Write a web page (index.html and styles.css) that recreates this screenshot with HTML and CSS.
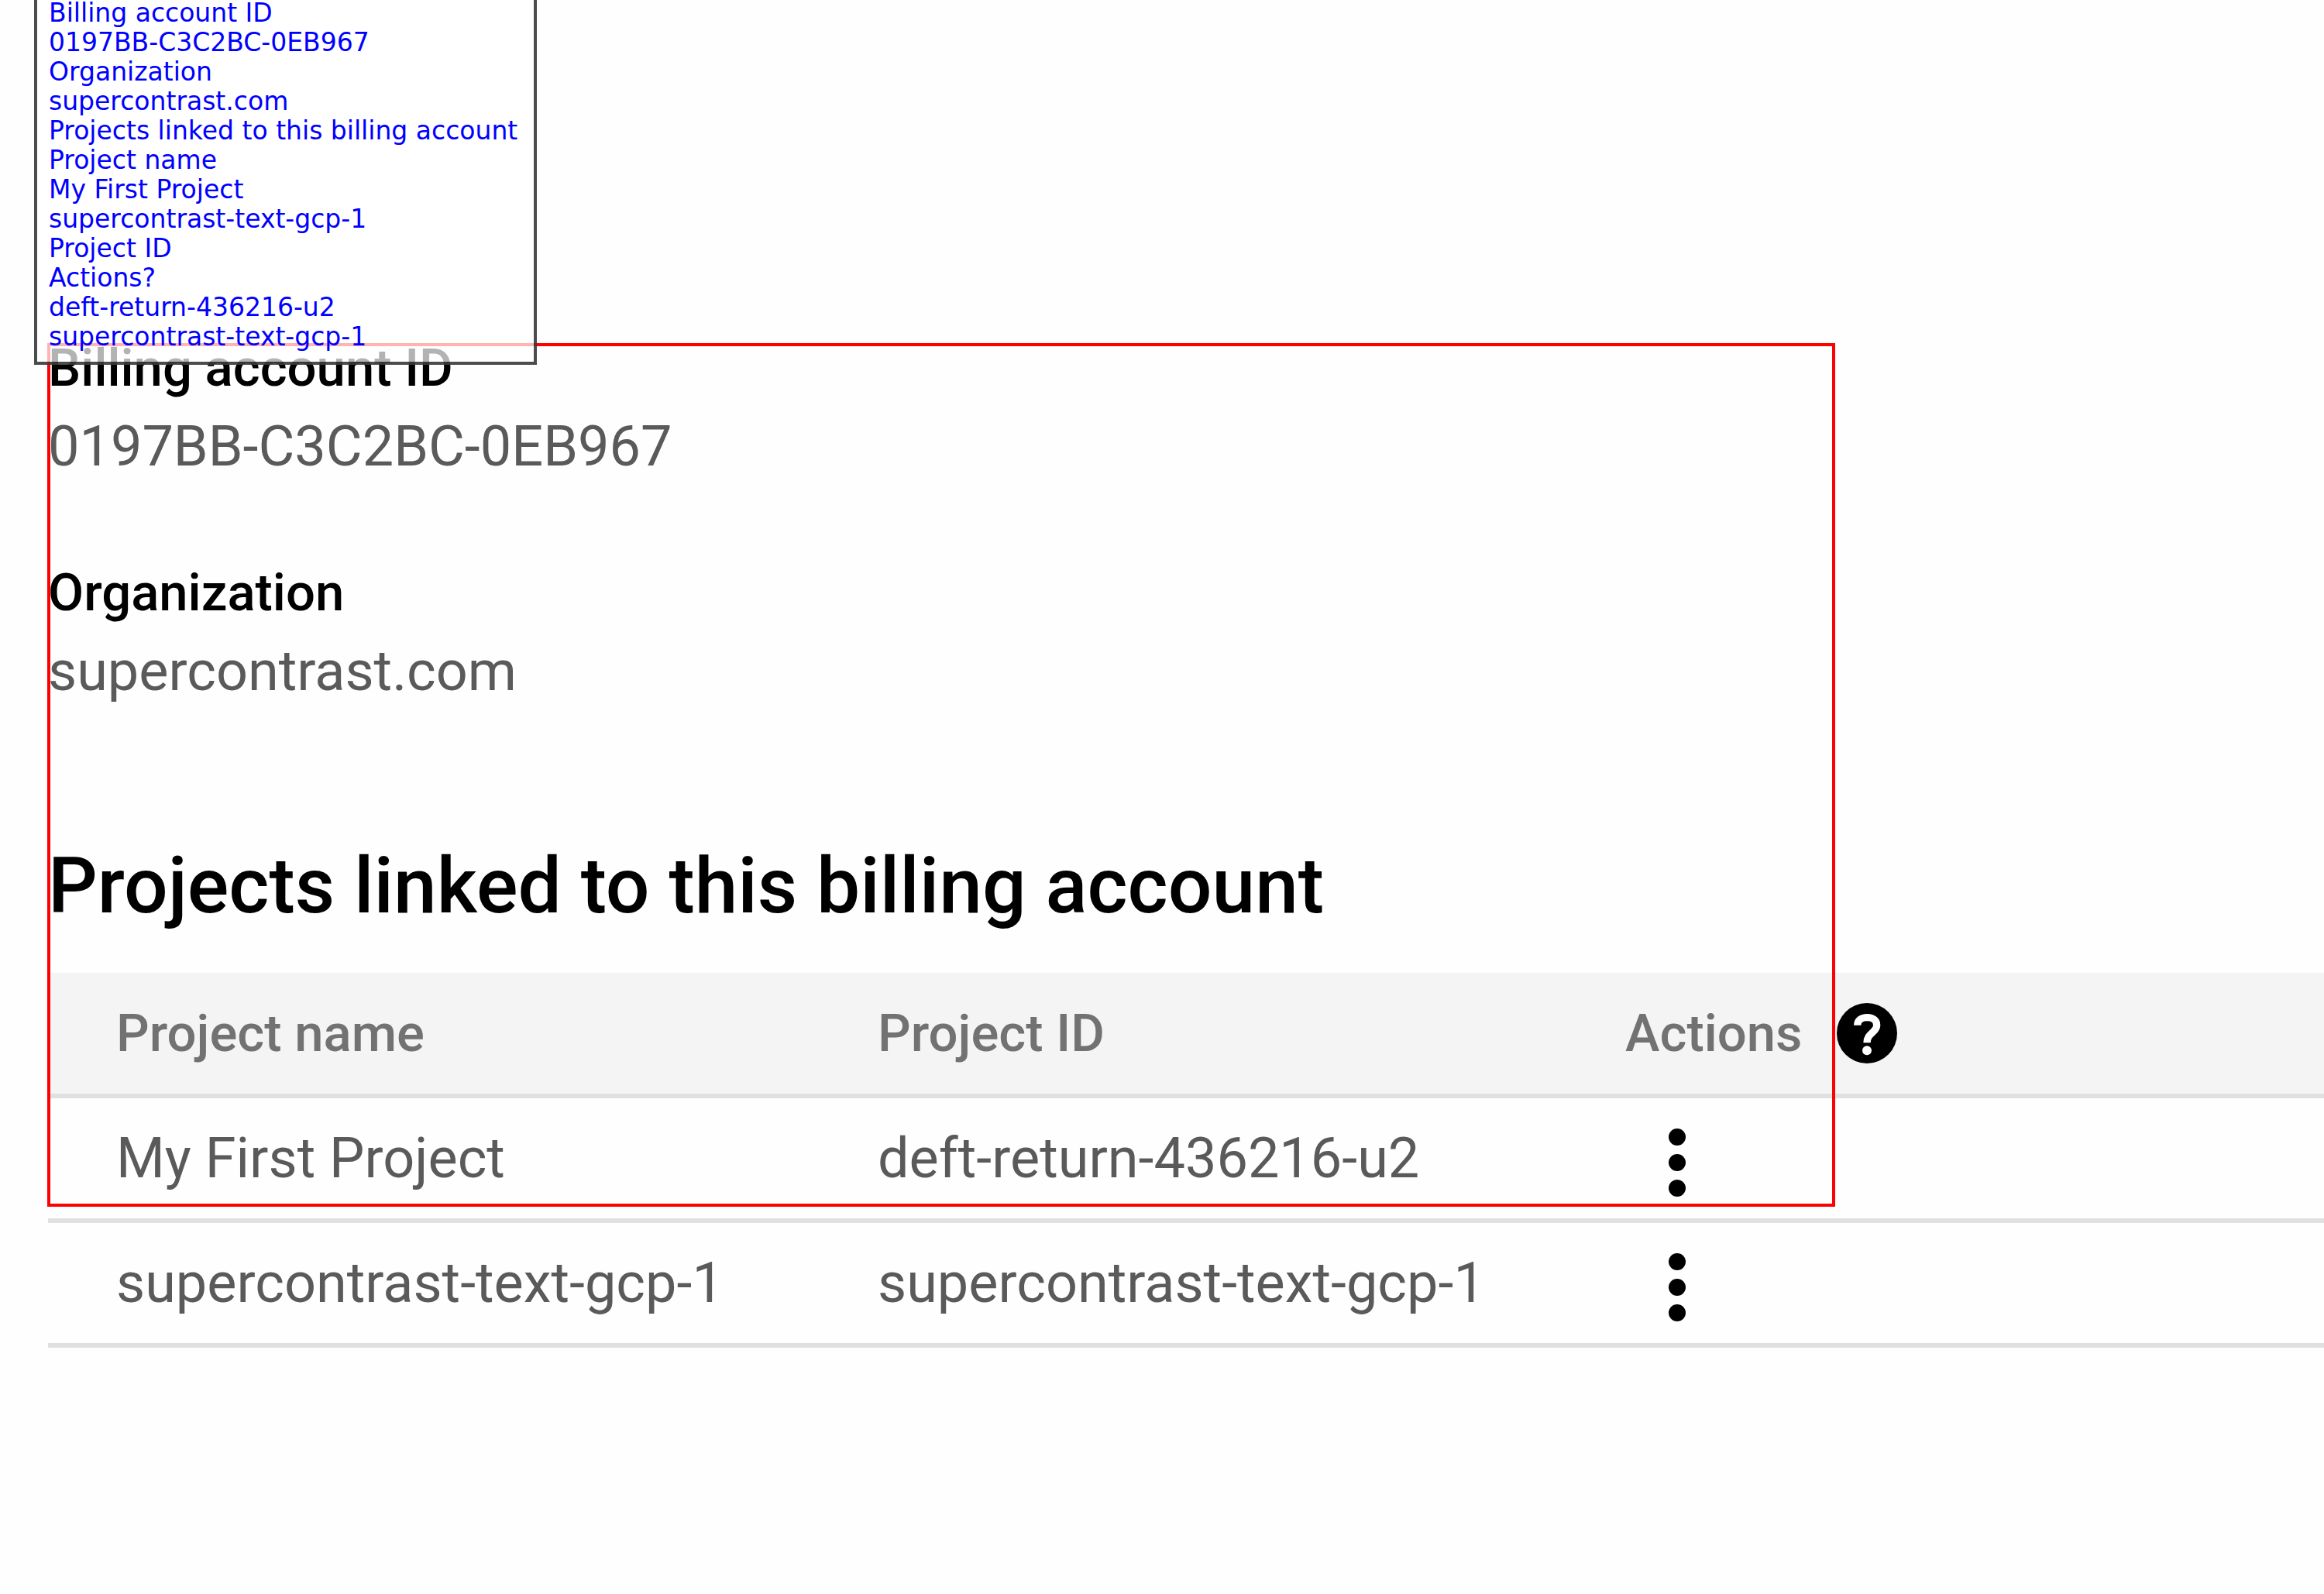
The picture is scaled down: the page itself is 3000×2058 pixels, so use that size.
FILE: index.html
```html
<!DOCTYPE html>
<html lang="en">
<head>
<meta charset="utf-8">
<meta name="viewport" content="width=device-width, initial-scale=1">
<title>Billing account</title>
<link rel="stylesheet" href="styles.css">
</head>
<body>
<main class="page">
  <dl class="details">
    <div class="detail">
      <dt class="detail-label">Billing account ID</dt>
      <dd class="detail-value">0197BB-C3C2BC-0EB967</dd>
    </div>
    <div class="detail">
      <dt class="detail-label">Organization</dt>
      <dd class="detail-value">supercontrast.com</dd>
    </div>
  </dl>

  <h1 class="title">Projects linked to this billing account</h1>

  <table class="projects">
    <colgroup>
      <col class="col-name">
      <col class="col-id">
      <col>
    </colgroup>
    <thead>
      <tr>
        <th scope="col">Project name</th>
        <th scope="col">Project ID</th>
        <th scope="col">
          <div class="actions-head">
            <span>Actions</span>
            <button class="help" type="button" aria-label="Help">
              <svg class="help-icon" viewBox="0 0 234 234" aria-hidden="true">
                <circle cx="117" cy="117" r="117"/>
                <path d="M80 86C80 67 96 56 118 56C141 56 155 68 155 86C155 114 117 116 117 154" fill="none" stroke="#fff" stroke-width="28"/>
                <circle cx="117" cy="184" r="18" fill="#fff"/>
              </svg>
            </button>
          </div>
        </th>
      </tr>
    </thead>
    <tbody>
      <tr>
        <td>My First Project</td>
        <td>deft-return-436216-u2</td>
        <td>
          <button class="more" type="button" aria-label="Actions for My First Project">
            <svg class="more-icon" viewBox="0 0 24 90" aria-hidden="true">
              <circle cx="12" cy="12" r="11"/><circle cx="12" cy="45" r="11"/><circle cx="12" cy="78" r="11"/>
            </svg>
          </button>
        </td>
      </tr>
      <tr>
        <td>supercontrast-text-gcp-1</td>
        <td>supercontrast-text-gcp-1</td>
        <td>
          <button class="more" type="button" aria-label="Actions for supercontrast-text-gcp-1">
            <svg class="more-icon" viewBox="0 0 24 90" aria-hidden="true">
              <circle cx="12" cy="12" r="11"/><circle cx="12" cy="45" r="11"/><circle cx="12" cy="78" r="11"/>
            </svg>
          </button>
        </td>
      </tr>
    </tbody>
  </table>

  <div class="region-outline"></div>
  <ul class="region-text">
    <li>Billing account ID</li>
    <li>0197BB-C3C2BC-0EB967</li>
    <li>Organization</li>
    <li>supercontrast.com</li>
    <li>Projects linked to this billing account</li>
    <li>Project name</li>
    <li>My First Project</li>
    <li>supercontrast-text-gcp-1</li>
    <li>Project ID</li>
    <li>Actions?</li>
    <li>deft-return-436216-u2</li>
    <li>supercontrast-text-gcp-1</li>
  </ul>
</main>
</body>
</html>
```
FILE: styles.css
```css
* {
  box-sizing: border-box;
}

body {
  margin: 0;
  background: #fefefe;
  color: #000;
  font-family: Roboto, "Liberation Sans", sans-serif;
  overflow-x: hidden;
}

.page {
  position: relative;
  padding: 435px 0 100px 62px;
}

/* Account details */
.details {
  display: flex;
  flex-direction: column;
  gap: 108px;
  margin: 0;
}

.detail {
  display: flex;
  flex-direction: column;
  gap: 22px;
}

.detail-label {
  font-size: 67px;
  font-weight: 500;
  line-height: 80px;
}

.detail-value {
  margin: 0;
  color: #5a5a5a;
  font-size: 72px;
  line-height: 80px;
}

.title {
  margin: 177px 0 52px;
  font-size: 100px;
  font-weight: 500;
  line-height: 120px;
}

/* Linked projects */
.projects {
  width: 100%;
  table-layout: fixed;
  border-spacing: 0;
}

.col-name {
  width: 983px;
}

.col-id {
  width: 965px;
}

.projects th,
.projects td {
  padding: 0 0 0 88px;
  border-bottom: 6px solid #e0e0e0;
  line-height: 80px;
  text-align: left;
  vertical-align: middle;
  white-space: nowrap;
}

.projects th {
  height: 162px;
  background: #f4f4f4;
  color: #727272;
  font-size: 67px;
  font-weight: 500;
}

.projects td {
  height: 161px;
  color: #5a5a5a;
  font-size: 72px;
}

.actions-head {
  display: flex;
  align-items: center;
  gap: 44px;
}

.help,
.more {
  display: flex;
  align-items: center;
  justify-content: center;
  padding: 0;
  border: 0;
  background: none;
  cursor: pointer;
}

.help-icon {
  width: 78px;
  height: 78px;
}

.more {
  width: 134px;
  height: 100px;
  padding-top: 10px;
}

.more-icon {
  width: 24px;
  height: 90px;
}

/* Selected region and the text read from it */
.region-outline {
  position: absolute;
  top: 443px;
  left: 61px;
  width: 2308px;
  height: 1115px;
  border: 4px solid #f00;
  pointer-events: none;
}

.region-text {
  position: absolute;
  top: -20px;
  left: 44px;
  width: 649px;
  margin: 0;
  padding: 14px 15px 13px;
  border: 4px solid rgba(0, 0, 0, 0.7);
  background: rgba(255, 255, 255, 0.7);
  color: #00f;
  font-family: "DejaVu Sans", sans-serif;
  font-size: 33px;
  line-height: 38px;
  list-style: none;
  white-space: nowrap;
}
```
